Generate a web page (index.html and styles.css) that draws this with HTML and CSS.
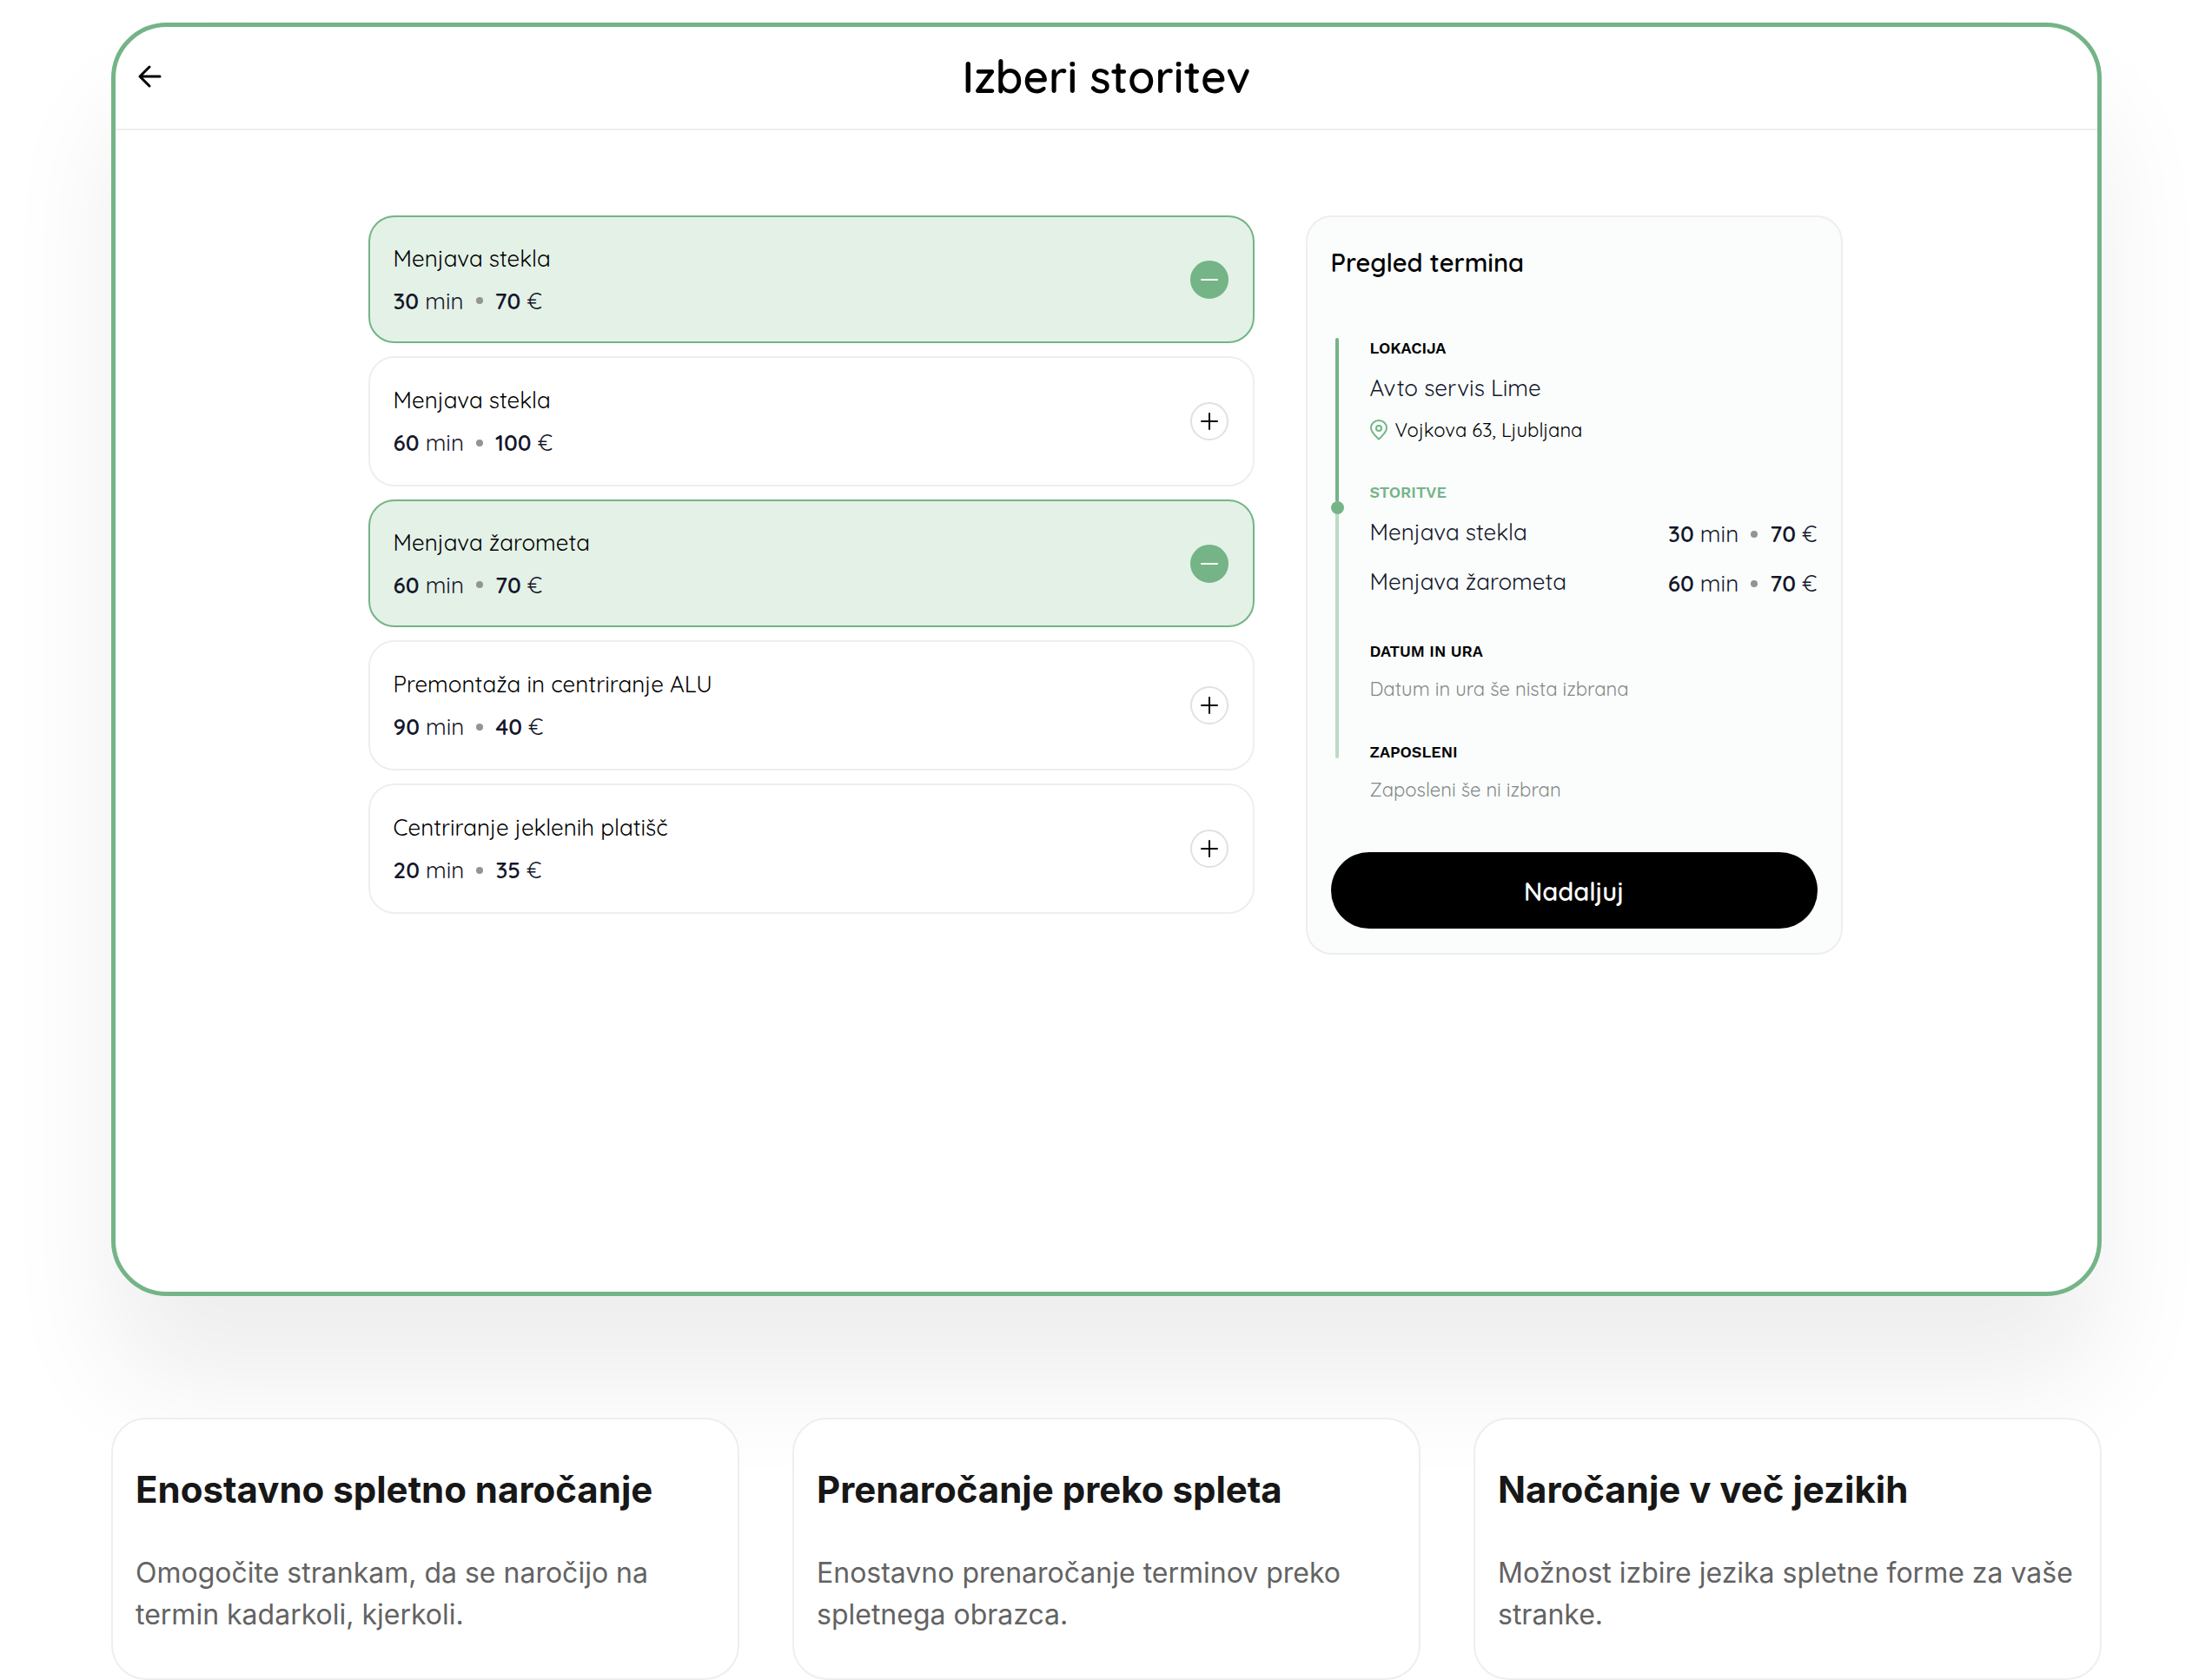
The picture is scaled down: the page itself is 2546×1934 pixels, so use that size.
FILE: index.html
```html
<!DOCTYPE html>
<html lang="sl">
<head>
<meta charset="utf-8">
<meta name="viewport" content="width=device-width, initial-scale=1">
<title>Izberi storitev</title>
<link rel="stylesheet" href="styles.css">
</head>
<body>
<main class="page">
  <section class="booking">
    <header class="booking-header">
      <button class="back" type="button" aria-label="Nazaj">
        <svg width="28" height="28" viewBox="0 0 28 28" fill="none" stroke="currentColor" stroke-width="3" stroke-linecap="round" stroke-linejoin="round"><path d="M26 14H3M14 3L3 14L14 25"/></svg>
      </button>
      <h1 class="booking-title">Izberi storitev</h1>
    </header>
    <div class="booking-body">
      <ul class="services">
        <li class="service service-selected">
          <div class="service-text">
            <h2 class="service-name">Menjava stekla</h2>
            <p class="meta"><span><b>30</b> min</span><i class="dot"></i><span><b>70</b> €</span></p>
          </div>
          <button class="toggle toggle-on" type="button" aria-label="Odstrani Menjava stekla"><svg width="20" height="20" viewBox="0 0 20 20" stroke="currentColor" stroke-width="2" stroke-linecap="round"><path d="M1 10H19"/></svg></button>
        </li>
        <li class="service">
          <div class="service-text">
            <h2 class="service-name">Menjava stekla</h2>
            <p class="meta"><span><b>60</b> min</span><i class="dot"></i><span><b>100</b> €</span></p>
          </div>
          <button class="toggle" type="button" aria-label="Dodaj Menjava stekla"><svg width="20" height="20" viewBox="0 0 20 20" stroke="currentColor" stroke-width="2" stroke-linecap="round"><path d="M1 10H19M10 1V19"/></svg></button>
        </li>
        <li class="service service-selected">
          <div class="service-text">
            <h2 class="service-name">Menjava žarometa</h2>
            <p class="meta"><span><b>60</b> min</span><i class="dot"></i><span><b>70</b> €</span></p>
          </div>
          <button class="toggle toggle-on" type="button" aria-label="Odstrani Menjava žarometa"><svg width="20" height="20" viewBox="0 0 20 20" stroke="currentColor" stroke-width="2" stroke-linecap="round"><path d="M1 10H19"/></svg></button>
        </li>
        <li class="service">
          <div class="service-text">
            <h2 class="service-name">Premontaža in centriranje ALU</h2>
            <p class="meta"><span><b>90</b> min</span><i class="dot"></i><span><b>40</b> €</span></p>
          </div>
          <button class="toggle" type="button" aria-label="Dodaj Premontaža in centriranje ALU"><svg width="20" height="20" viewBox="0 0 20 20" stroke="currentColor" stroke-width="2" stroke-linecap="round"><path d="M1 10H19M10 1V19"/></svg></button>
        </li>
        <li class="service">
          <div class="service-text">
            <h2 class="service-name">Centriranje jeklenih platišč</h2>
            <p class="meta"><span><b>20</b> min</span><i class="dot"></i><span><b>35</b> €</span></p>
          </div>
          <button class="toggle" type="button" aria-label="Dodaj Centriranje jeklenih platišč"><svg width="20" height="20" viewBox="0 0 20 20" stroke="currentColor" stroke-width="2" stroke-linecap="round"><path d="M1 10H19M10 1V19"/></svg></button>
        </li>
      </ul>
      <aside class="summary">
        <h2 class="summary-title">Pregled termina</h2>
        <div class="progress">
          <div class="rail">
            <span class="rail-done"></span>
            <span class="rail-dot"></span>
            <span class="rail-todo"></span>
          </div>
          <div class="steps">
            <section>
              <h3 class="label">Lokacija</h3>
              <p class="value">Avto servis Lime</p>
              <p class="address">
                <svg class="pin" width="20" height="24" viewBox="0 0 20 24" fill="none" stroke="currentColor" stroke-width="2" stroke-linejoin="round"><path d="M10 22.500C7 19.500 1 15 1 9.500A9 8.500 0 0 1 19 9.500C19 15 13 19.500 10 22.500Z"/><circle cx="10" cy="10" r="3"/></svg>
                Vojkova 63, Ljubljana
              </p>
            </section>
            <section>
              <h3 class="label label-current">Storitve</h3>
              <ul class="chosen">
                <li class="chosen-row"><span class="value">Menjava stekla</span><span class="meta"><span><b>30</b> min</span><i class="dot"></i><span><b>70</b> €</span></span></li>
                <li class="chosen-row"><span class="value">Menjava žarometa</span><span class="meta"><span><b>60</b> min</span><i class="dot"></i><span><b>70</b> €</span></span></li>
              </ul>
            </section>
            <section>
              <h3 class="label">Datum in ura</h3>
              <p class="empty">Datum in ura še nista izbrana</p>
            </section>
            <section>
              <h3 class="label">Zaposleni</h3>
              <p class="empty">Zaposleni še ni izbran</p>
            </section>
          </div>
        </div>
        <button class="next" type="button">Nadaljuj</button>
      </aside>
    </div>
  </section>
  <section class="features">
    <article class="feature">
      <h2 class="feature-title">Enostavno spletno naročanje</h2>
      <p class="feature-text">Omogočite strankam, da se naročijo na termin kadarkoli, kjerkoli.</p>
    </article>
    <article class="feature">
      <h2 class="feature-title">Prenaročanje preko spleta</h2>
      <p class="feature-text">Enostavno prenaročanje terminov preko spletnega obrazca.</p>
    </article>
    <article class="feature">
      <h2 class="feature-title">Naročanje v več jezikih</h2>
      <p class="feature-text">Možnost izbire jezika spletne forme za vaše stranke.</p>
    </article>
  </section>
</main>
</body>
</html>
```
FILE: styles.css
```css
:root {
  --green: #74b487;
  --green-soft: #e4f1e7;
  --green-rail: #badcc4;
  --line: #eeeeee;
  --ink: #14172b;
  --rounded: Quicksand, Lato, sans-serif;
}

* {
  box-sizing: border-box;
}

body,
h1,
h2,
h3,
p,
ul {
  margin: 0;
  padding: 0;
}

body {
  background: #fff;
  color: #000;
  font-family: var(--rounded);
  overflow-x: hidden;
}

ul {
  list-style: none;
}

button {
  font-family: inherit;
  cursor: pointer;
}

.page {
  padding: 26px 127px 0 128px;
}

/* Booking window */
.booking {
  border: 5px solid var(--green);
  border-radius: 64px;
  background: #fff;
  box-shadow: 0 97px 130px rgba(0, 0, 0, 0.07);
}

.booking-header {
  display: grid;
  grid-template-columns: 1fr auto 1fr;
  align-items: center;
  padding: 26px 25px 29px;
  border-bottom: 2px solid var(--line);
}

.back {
  display: flex;
  justify-self: start;
  padding: 0;
  border: 0;
  background: none;
  color: #000;
}

.booking-title {
  font-size: 51px;
  font-weight: 600;
  line-height: 62px;
}

.booking-body {
  display: grid;
  grid-template-columns: minmax(0, 1fr) 618px;
  align-items: start;
  gap: 59px;
  max-width: 1700px;
  margin: 0 auto;
  padding: 98px 3px 388px 0;
}

/* Service list */
.services {
  display: grid;
  gap: 15px;
}

.service {
  display: flex;
  align-items: center;
  justify-content: space-between;
  min-height: 150px;
  padding: 0 28px 0 27px;
  border: 2px solid var(--line);
  border-radius: 30px;
  background: #fff;
}

.service-selected {
  min-height: 147px;
  border-color: var(--green);
  background: var(--green-soft);
}

.service-name {
  font-size: 26px;
  font-weight: 400;
  line-height: 49px;
}

.meta {
  display: flex;
  align-items: center;
  gap: 14px;
  color: var(--ink);
  font-size: 26px;
  line-height: 49px;
}

.meta b {
  font-weight: 600;
}

.dot {
  width: 8px;
  height: 8px;
  border-radius: 50%;
  background: #949494;
}

.toggle {
  display: grid;
  place-items: center;
  width: 44px;
  height: 44px;
  padding: 0;
  border: 2px solid #dde3e1;
  border-radius: 50%;
  background: #fff;
  color: #000;
}

.toggle-on {
  border-color: var(--green);
  background: var(--green);
  color: #fff;
}

/* Appointment summary */
.summary {
  padding: 34px 27px 28px;
  border: 2px solid var(--line);
  border-radius: 30px;
  background: #fafdfc;
}

.summary-title {
  font-size: 29px;
  font-weight: 600;
  line-height: 36px;
}

.progress {
  display: grid;
  grid-template-columns: 15px minmax(0, 1fr);
  gap: 30px;
  margin: 69px 0 55px;
}

.rail {
  display: flex;
  flex-direction: column;
  align-items: center;
  margin-bottom: 53px;
}

.rail-done,
.rail-todo {
  width: 4px;
  border-radius: 2px 2px 0 0;
  background: var(--green);
}

.rail-done {
  flex: 188;
}

.rail-todo {
  flex: 281;
  border-radius: 0 0 2px 2px;
  background: var(--green-rail);
}

.rail-dot {
  width: 15px;
  height: 15px;
  border-radius: 50%;
  background: var(--green);
}

.steps {
  display: grid;
  gap: 44px;
}

.label {
  margin-bottom: 14px;
  font-family: "Work Sans", Inter, sans-serif;
  font-size: 18px;
  font-weight: 600;
  line-height: 24px;
  text-transform: uppercase;
}

.label-current {
  color: var(--green);
}

.value {
  color: var(--ink);
  font-size: 26px;
  line-height: 40px;
}

.address {
  display: flex;
  align-items: center;
  gap: 9px;
  margin-top: 12px;
  font-size: 22px;
  line-height: 32px;
}

.pin {
  color: var(--green);
}

.chosen {
  display: grid;
  gap: 13px;
}

.chosen-row {
  display: flex;
  align-items: flex-start;
  justify-content: space-between;
}

.chosen .meta {
  line-height: 44px;
}

.empty {
  color: #858787;
  font-size: 22px;
  line-height: 34px;
}

.next {
  display: block;
  width: 100%;
  padding: 25px 24px 23px;
  border: 0;
  border-radius: 44px;
  background: #000;
  color: #fff;
  font-size: 29px;
  font-weight: 600;
  line-height: 40px;
}

/* Feature cards */
.features {
  display: grid;
  grid-template-columns: repeat(3, minmax(0, 1fr));
  gap: 61px;
  margin-top: 140px;
}

.feature {
  position: relative;
  padding: 51px 26px 49px;
  border: 2px solid var(--line);
  border-radius: 40px;
  background: #fff;
  font-family: Inter, sans-serif;
}

.feature-title {
  margin-bottom: 42px;
  color: #171717;
  font-size: 42px;
  font-weight: 700;
  line-height: 60px;
}

.feature-text {
  color: #636363;
  font-size: 32px;
  line-height: 48px;
}
```
